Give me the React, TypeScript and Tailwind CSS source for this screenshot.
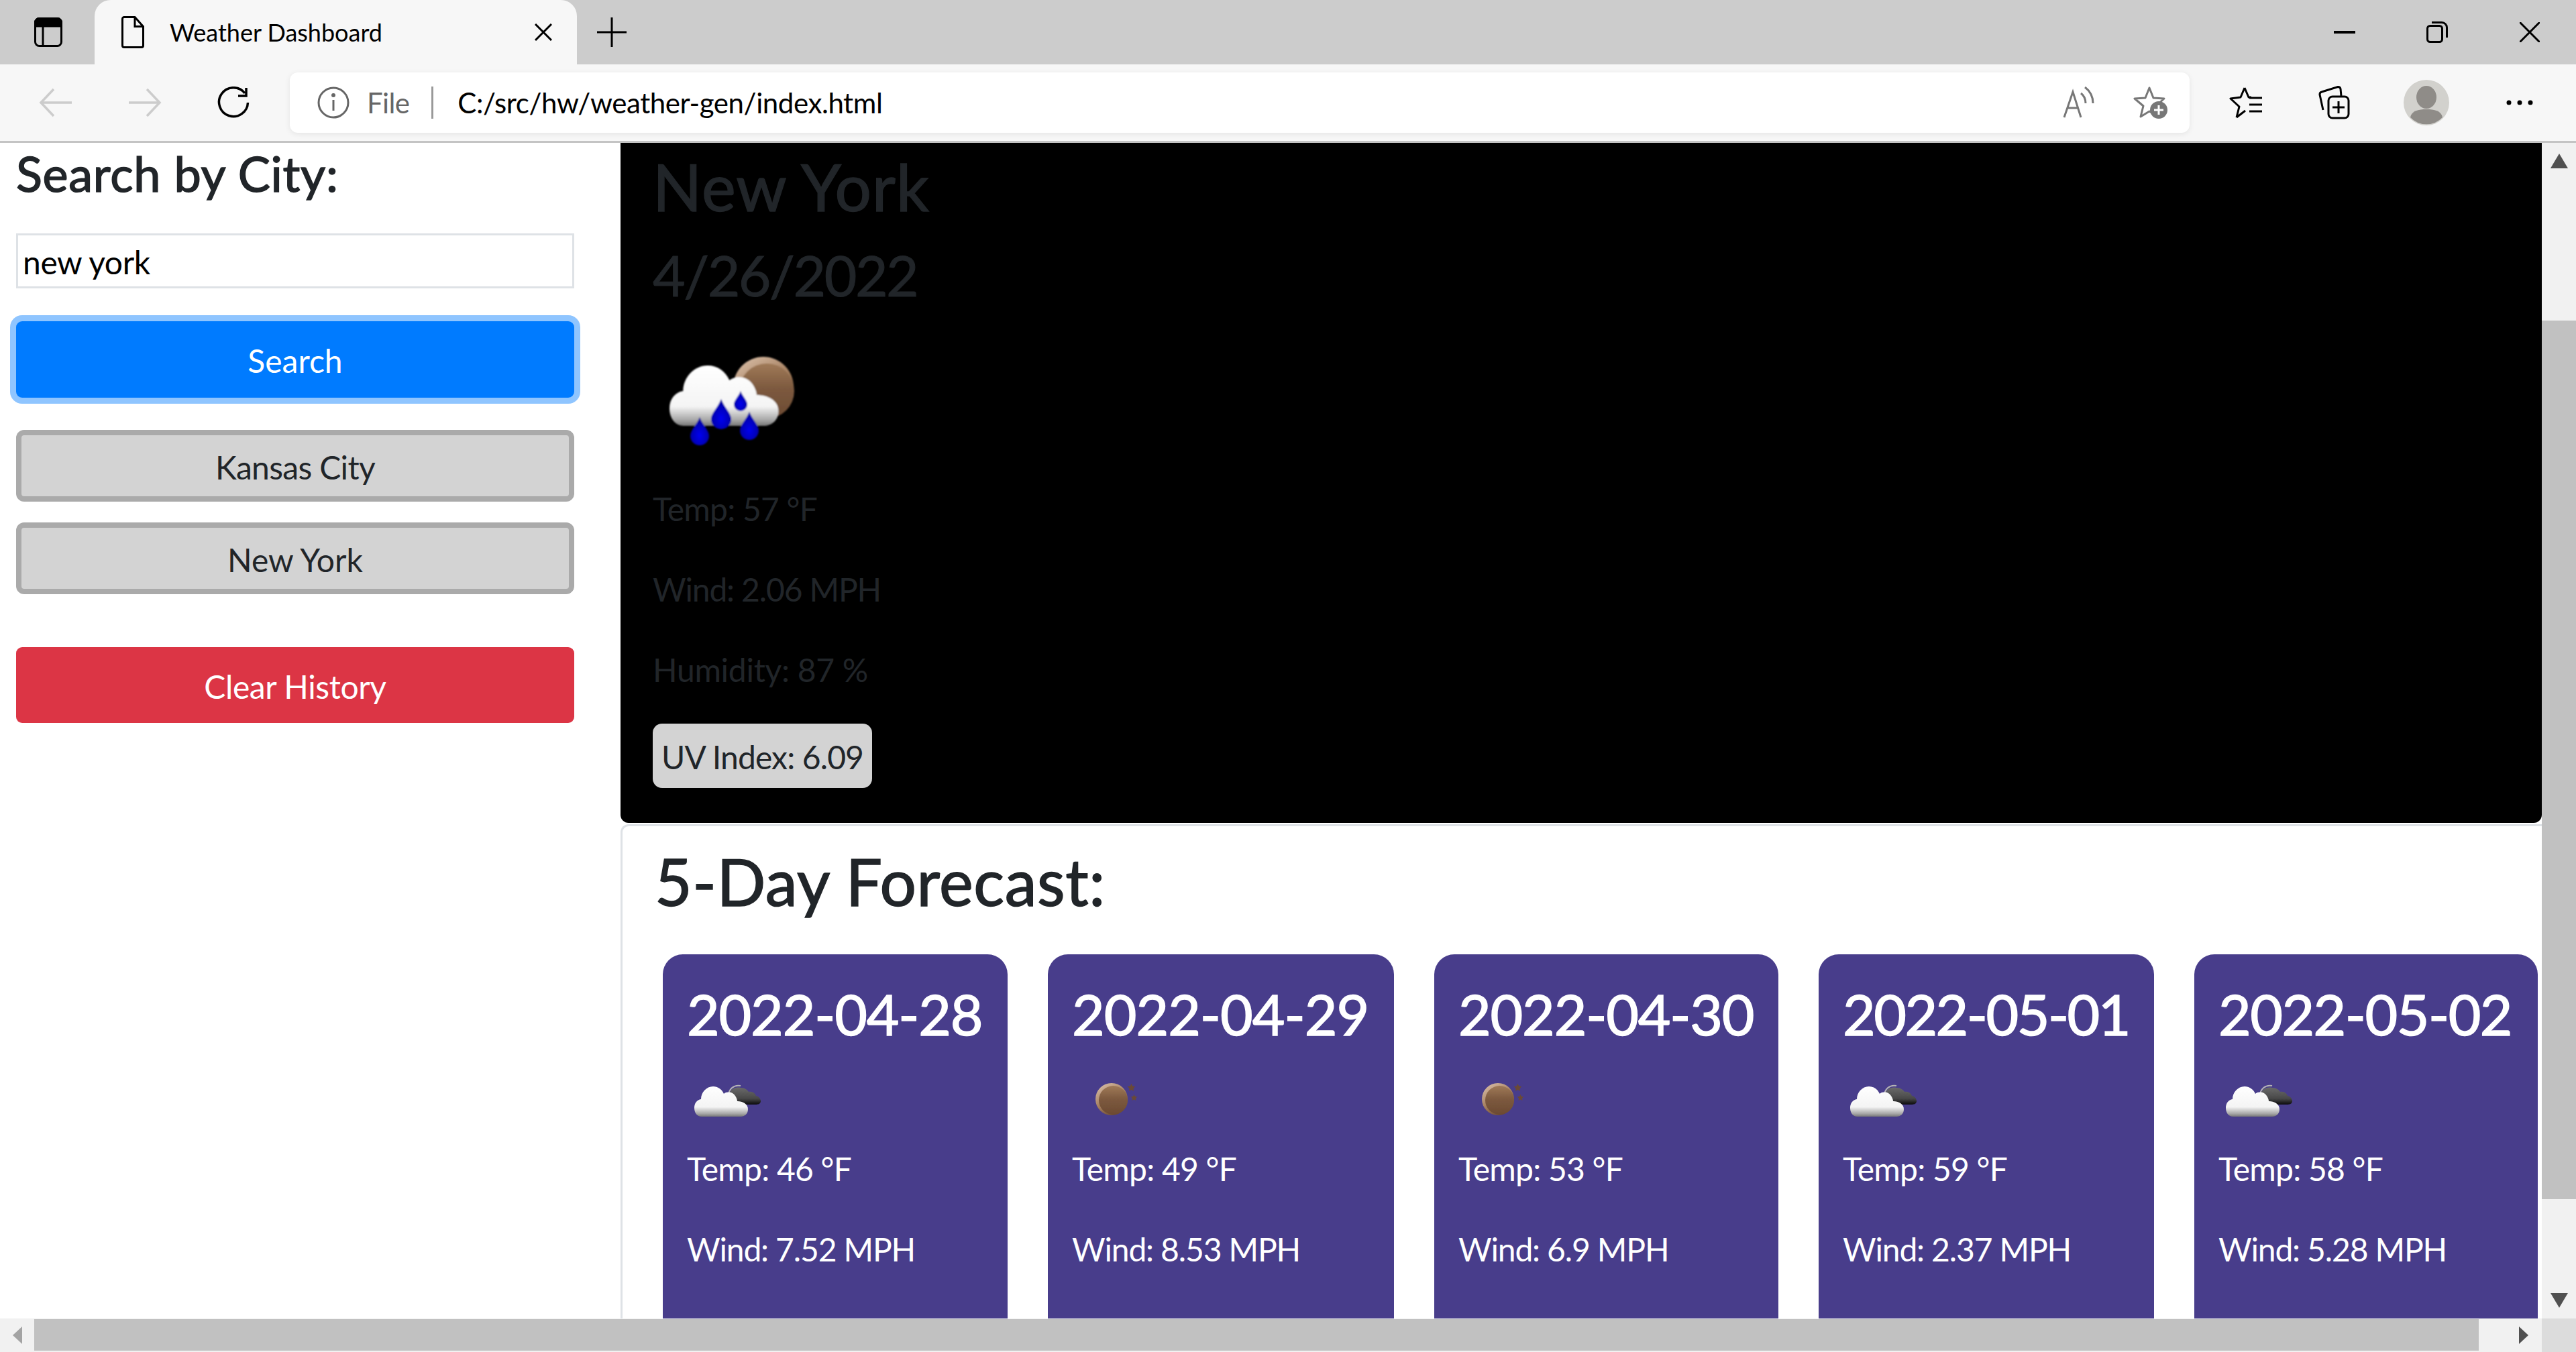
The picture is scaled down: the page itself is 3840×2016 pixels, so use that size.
import React from 'react';

const cloudPath =
  'M22 103 C14 103 11 96 11 90 C11 83 15 78 21 77 C21 67 29 58 39 58 C46 58 52 62 55 69 C60 65 68 66 72 72 C74 75 75 78 75 80 C83 80 91 84 91 92 C91 99 86 103 80 103 Z';

const drop = (cx: number, cy: number, r: number) =>
  `M${cx} ${cy - 2 * r} C${cx + 0.3 * r} ${cy - 1.2 * r} ${cx + r} ${cy - 0.6 * r} ${cx + r} ${cy} A${r} ${r} 0 1 1 ${cx - r} ${cy} C${cx - r} ${cy - 0.6 * r} ${cx - 0.3 * r} ${cy - 1.2 * r} ${cx} ${cy - 2 * r} Z`;

const star = (cx: number, cy: number, r: number) => {
  const pts: string[] = [];
  for (let i = 0; i < 10; i++) {
    const a = (Math.PI / 5) * i - Math.PI / 2;
    const d = i % 2 === 0 ? r : r * 0.5;
    pts.push(`${cx + d * Math.cos(a)},${cy + d * Math.sin(a)}`);
  }
  return pts.join(' ');
};

const Gradients = () => (
  <svg width="0" height="0" className="absolute">
    <defs>
      <linearGradient id="whiteCloud" x1="0" y1="0" x2="0" y2="1">
        <stop offset="0" stopColor="#ffffff" />
        <stop offset="0.68" stopColor="#f4f4f4" />
        <stop offset="0.9" stopColor="#a8a8a8" />
        <stop offset="1" stopColor="#777777" />
      </linearGradient>
      <linearGradient id="darkCloud" x1="0" y1="0" x2="0" y2="1">
        <stop offset="0" stopColor="#6a6a6a" />
        <stop offset="0.65" stopColor="#484848" />
        <stop offset="1" stopColor="#0c0c0c" />
      </linearGradient>
      <linearGradient id="moonRim" x1="0" y1="0" x2="0.6" y2="1">
        <stop offset="0" stopColor="#e0c6b0" />
        <stop offset="0.6" stopColor="#a27c5c" />
        <stop offset="1" stopColor="#6b4a30" />
      </linearGradient>
      <linearGradient id="moonBody" x1="0" y1="0" x2="0" y2="1">
        <stop offset="0" stopColor="#a07a58" />
        <stop offset="0.45" stopColor="#7d5a3f" />
        <stop offset="1" stopColor="#6c4a32" />
      </linearGradient>
      <radialGradient id="waterDrop" cx="0.5" cy="0.65" r="0.6">
        <stop offset="0" stopColor="#0000f0" />
        <stop offset="1" stopColor="#000099" />
      </radialGradient>
      <filter id="soft" x="-10%" y="-10%" width="120%" height="120%">
        <feGaussianBlur stdDeviation="0.7" />
      </filter>
      <filter id="softer" x="-10%" y="-10%" width="120%" height="120%">
        <feGaussianBlur stdDeviation="1.2" />
      </filter>
    </defs>
  </svg>
);

const CloudIcon = () => (
  <svg viewBox="0 0 150 145" className="w-[150px] h-[145px]">
    <g filter="url(#soft)">
      <path d="M62 72 C62 62 70 55 80 57" fill="none" stroke="#b5b5b5" strokeWidth="2" />
      <path d="M62 72 C64 62 72 58 80 60 C86 60 90 63 92 66 C98 65 102 69 103 72 C108 73 110 77 110 80 C110 84 106 85 102 85 L80 85 L62 78 Z" fill="url(#darkCloud)" />
      <path d={cloudPath} fill="url(#whiteCloud)" />
    </g>
  </svg>
);

const MoonIcon = () => (
  <svg viewBox="0 0 150 145" className="w-[150px] h-[145px]">
    <g filter="url(#soft)">
      <circle cx="59" cy="77" r="24" fill="url(#moonRim)" />
      <circle cx="61.5" cy="78.5" r="21.5" fill="url(#moonBody)" />
      <polygon points={star(88.5, 60, 6)} fill="#6b4a35" />
      <polygon points={star(92.5, 75, 5)} fill="#6b4a35" />
    </g>
  </svg>
);

const RainIcon = () => (
  <svg viewBox="0 0 240 237" className="w-[240px] h-[237px]">
    <g filter="url(#softer)">
      <circle cx="165" cy="93" r="45" fill="url(#moonRim)" />
      <circle cx="170" cy="99" r="41" fill="url(#moonBody)" />
      <path d={cloudPath} fill="url(#whiteCloud)" transform="translate(2.7 -55) scale(2.03 2)" />
      <path d={drop(102, 141, 15)} fill="url(#waterDrop)" />
      <path d={drop(70, 166, 14)} fill="url(#waterDrop)" />
      <path d={drop(144, 158, 14)} fill="url(#waterDrop)" />
      <path d={drop(131, 119, 10)} fill="url(#waterDrop)" />
    </g>
  </svg>
);

const forecast = [
  { date: '2022-04-28', temp: 46, wind: '7.52', humidity: 64, night: false, width: 'w-[514px]', track: 'tracking-[-0.014em]' },
  { date: '2022-04-29', temp: 49, wind: '8.53', humidity: 58, night: true, width: 'w-[516px]', track: 'tracking-[-0.012em]' },
  { date: '2022-04-30', temp: 53, wind: '6.9', humidity: 52, night: true, width: 'w-[513px]', track: 'tracking-[-0.014em]' },
  { date: '2022-05-01', temp: 59, wind: '2.37', humidity: 60, night: false, width: 'w-[500px]', track: 'tracking-[-0.03em]' },
  { date: '2022-05-02', temp: 58, wind: '5.28', humidity: 71, night: false, width: 'w-[512px]', track: 'tracking-[-0.018em]' },
];

const TabStrip = () => (
  <div className="h-[96px] shrink-0 bg-[#cccccc] flex items-end">
    <div className="ml-[51px] w-[90px] h-[96px] flex items-center">
      <svg viewBox="0 0 42 44" className="w-[42px] h-[44px]" fill="none" stroke="#000" strokeWidth="3">
        <rect x="1.5" y="1.5" width="39" height="41" rx="6" />
        <path d="M1.5 8 a6 6 0 0 1 6 -6.5 h27 a6 6 0 0 1 6 6.5 v5 h-39 z" fill="#000" />
        <path d="M13 13 V42" />
      </svg>
    </div>
    <div className="w-[719px] h-[96px] bg-[#f7f7f7] rounded-t-[24px] flex items-center pl-[40px] pr-[37px]">
      <svg viewBox="0 0 34 48" className="w-[34px] h-[48px] shrink-0" fill="none" stroke="#000" strokeWidth="3">
        <path d="M1.5 4 a2.5 2.5 0 0 1 2.5 -2.5 h16 l12.5 14 v28.5 a2.5 2.5 0 0 1 -2.5 2.5 h-26 a2.5 2.5 0 0 1 -2.5 -2.5 z" />
        <path d="M20 1.5 v14 h12.5" />
      </svg>
      <span className="ml-[38px] text-[36px] leading-[48px] text-black">Weather Dashboard</span>
      <svg viewBox="0 0 26 26" className="ml-auto w-[26px] h-[26px]" stroke="#000" strokeWidth="3">
        <path d="M1 1 L25 25 M25 1 L1 25" />
      </svg>
    </div>
    <div className="ml-[30px] h-[96px] flex items-center">
      <svg viewBox="0 0 44 44" className="w-[44px] h-[44px]" stroke="#000" strokeWidth="3">
        <path d="M22 0 V44 M0 22 H44" />
      </svg>
    </div>
    <div className="ml-auto h-[96px] flex">
      <div className="w-[138px] flex items-center justify-center">
        <svg viewBox="0 0 32 4" className="w-[32px] h-[4px]" stroke="#000" strokeWidth="4">
          <path d="M0 2 H32" />
        </svg>
      </div>
      <div className="w-[138px] flex items-center justify-center">
        <svg viewBox="0 0 32 32" className="w-[32px] h-[32px]" fill="none" stroke="#000" strokeWidth="3">
          <rect x="1.5" y="6.5" width="22" height="24" rx="4" />
          <path d="M8 1.5 H23 a7.5 7.5 0 0 1 7.5 7.5 V24" />
        </svg>
      </div>
      <div className="w-[138px] flex items-center justify-center">
        <svg viewBox="0 0 30 30" className="w-[30px] h-[30px]" stroke="#000" strokeWidth="3">
          <path d="M0 0 L30 30 M30 0 L0 30" />
        </svg>
      </div>
    </div>
  </div>
);

const Toolbar = () => (
  <div className="h-[117px] shrink-0 bg-[#f7f7f7] border-b-[3px] border-[#c4c4c4] flex items-center pl-[17px]">
    <div className="w-[132px] flex justify-center">
      <svg viewBox="0 0 50 44" className="w-[50px] h-[44px]" fill="none" stroke="#cccccc" strokeWidth="3.5">
        <path d="M49 22 H3 M22 2 L3 22 L22 42" />
      </svg>
    </div>
    <div className="w-[133px] flex justify-center">
      <svg viewBox="0 0 50 44" className="w-[50px] h-[44px]" fill="none" stroke="#cccccc" strokeWidth="3.5">
        <path d="M1 22 H47 M28 2 L47 22 L28 42" />
      </svg>
    </div>
    <div className="w-[132px] flex justify-center">
      <svg viewBox="0 0 48 48" className="w-[48px] h-[48px]" fill="none" stroke="#000" strokeWidth="3.5">
        <path d="M41 10 A21.5 21.5 0 1 0 45.5 24" />
        <path d="M43 2 V14 H31" />
      </svg>
    </div>
    <div className="ml-[18px] w-[2832px] h-[90px] bg-white rounded-[12px] shadow-[0_2px_8px_rgba(0,0,0,0.08)] flex items-center pl-[41px] pr-[32px]">
      <svg viewBox="0 0 48 48" className="w-[48px] h-[48px] shrink-0" fill="none" stroke="#666" strokeWidth="3">
        <circle cx="24" cy="24" r="22" />
        <path d="M24 20 V36" />
        <circle cx="24" cy="13" r="1.5" fill="#666" />
      </svg>
      <span className="ml-[26px] text-[42px] leading-[48px] text-[#666666] tracking-[-0.015em]">File</span>
      <span className="ml-[33px] w-[3px] h-[48px] bg-[#999999]" />
      <span className="ml-[36px] text-[42px] leading-[48px] text-black tracking-[-0.01em]">C:/src/hw/weather-gen/index.html</span>
      <svg viewBox="0 0 48 48" className="ml-auto w-[48px] h-[48px]" fill="none" stroke="#777" strokeWidth="3">
        <path d="M2 46 L15 8 L27 46 M7 32 H23" />
        <path d="M27 10 C32 14 34 19 34 25" />
        <path d="M33 1 C41 7 45 15 45 25" />
      </svg>
      <svg viewBox="0 0 52 50" className="ml-[57px] w-[52px] h-[50px]" fill="none" stroke="#777" strokeWidth="3">
        <path d="M24 3 L30 18 L46 19 L34 30 L38 46 L24 38 L11 46 L15 30 L2 19 L18 18 Z" strokeLinejoin="round" />
        <circle cx="38" cy="36" r="13" fill="#777" stroke="none" />
        <path d="M38 29 V43 M31 36 H45" stroke="#fff" />
      </svg>
    </div>
    <div className="ml-[18px] w-[132px] flex justify-center">
      <svg viewBox="0 0 50 48" className="w-[50px] h-[48px]" fill="none" stroke="#000" strokeWidth="3">
        <path d="M23 2 L29 16 H33 M11 46 L15 30 L2 18 L17 16 L23 2 M11 46 L24 36" strokeLinejoin="round" />
        <path d="M30 17 H49 M30 27 H49 M30 37 H49" />
      </svg>
    </div>
    <div className="w-[130px] flex justify-center">
      <svg viewBox="0 0 48 50" className="w-[48px] h-[50px]" fill="none" stroke="#000" strokeWidth="3">
        <path d="M8 36 L3 13 a4 4 0 0 1 3 -4 L30 1.5 a4 4 0 0 1 4 3 L35 15" />
        <rect x="16" y="16" width="30" height="32" rx="6" />
        <path d="M31 23 V41 M22 32 H40" />
      </svg>
    </div>
    <div className="w-[146px] flex justify-center">
      <svg viewBox="0 0 68 68" className="w-[68px] h-[68px]">
        <circle cx="34" cy="34" r="34" fill="#d2d1cd" />
        <ellipse cx="34" cy="26" rx="15" ry="17" fill="#8f8c88" />
        <path d="M10 56 C12 46 22 44 34 44 C46 44 56 46 58 56 A33 33 0 0 1 10 56 Z" fill="#8f8c88" />
      </svg>
    </div>
    <div className="w-[132px] flex justify-center">
      <svg viewBox="0 0 40 8" className="w-[40px] h-[8px]" fill="#000">
        <circle cx="4" cy="4" r="3.5" />
        <circle cx="20" cy="4" r="3.5" />
        <circle cx="36" cy="4" r="3.5" />
      </svg>
    </div>
  </div>
);

const Sidebar = () => (
  <aside className="w-[925px] shrink-0 bg-white pl-[24px] pt-[2px] pr-[69px]">
    <h4 className="text-[72px] leading-[86px] tracking-[0.01em] [-webkit-text-stroke:1.5px_#212529] text-[#212529]">Search by City:</h4>
    <input
      readOnly
      value="new york"
      className="mt-[47px] block w-full h-[82px] border-[3px] border-[#dee2e6] pl-[7px] pt-[2px] text-[48px] tracking-[-0.008em] text-black outline-none"
    />
    <button className="mt-[49px] block w-full h-[114px] rounded-[9px] bg-[#007bff] pt-[4px] text-[48px] leading-[72px] text-white shadow-[0_0_0_9px_#8fc5ff]">
      Search
    </button>
    <button className="mt-[48px] block w-full h-[107px] rounded-[12px] border-[8px] border-[#aaaaaa] bg-[#d3d3d3] pt-[4px] text-[48px] leading-[72px] tracking-[-0.014em] text-[#212529]">
      Kansas City
    </button>
    <button className="mt-[31px] block w-full h-[107px] rounded-[12px] border-[8px] border-[#aaaaaa] bg-[#d3d3d3] pt-[4px] text-[48px] leading-[72px] text-[#212529]">
      New York
    </button>
    <button className="mt-[79px] block w-full h-[113px] rounded-[9px] bg-[#dc3545] pt-[4px] text-[48px] leading-[72px] tracking-[-0.008em] text-white">
      Clear History
    </button>
  </aside>
);

const CurrentWeather = () => (
  <section className="h-[1014px] shrink-0 bg-black rounded-b-[12px] pl-[48px] pt-[7px] text-[#212529]">
    <h2 className="text-[96px] leading-[115px] tracking-[0.012em] [-webkit-text-stroke:1.5px_#212529]">New York</h2>
    <h2 className="mt-[24px] text-[84px] leading-[101px] tracking-[-0.03em] [-webkit-text-stroke:1px_#212529]">4/26/2022</h2>
    <div className="mt-[24px] h-[239px]">
      <RainIcon />
    </div>
    <p className="text-[48px] leading-[72px] tracking-[-0.016em]">Temp: 57 °F</p>
    <p className="mt-[48px] text-[48px] leading-[72px] tracking-[-0.024em]">Wind: 2.06 MPH</p>
    <p className="mt-[48px] text-[48px] leading-[72px] tracking-[-0.006em]">Humidity: 87 %</p>
    <p className="mt-[44px] w-[327px] h-[96px] rounded-[14px] bg-[#d3d3d3] pl-[13px] pt-[14px] text-[48px] leading-[72px] tracking-[-0.018em] whitespace-nowrap">UV Index: 6.09</p>
  </section>
);

const Forecast = () => (
  <section className="mt-[2px] flex-1 min-h-0 overflow-hidden bg-white border-[3px] border-b-0 border-r-0 border-[#dee2e6] rounded-tl-[12px] pt-[24px]">
    <h2 className="ml-[48px] text-[96px] leading-[115px] tracking-[0.006em] [-webkit-text-stroke:1.5px_#212529] text-[#212529]">5-Day Forecast:</h2>
    <div className="mt-[52px] ml-[60px] flex gap-[60px]">
      {forecast.map((day) => (
        <div key={day.date} className={`${day.width} shrink-0 bg-[#483d8b] rounded-[30px] px-[36px] pt-[38px] pb-[36px] text-white`}>
          <h3 className={`${day.track} text-[84px] leading-[101px] [-webkit-text-stroke:1.5px_#ffffff] whitespace-nowrap`}>{day.date}</h3>
          <div className="h-[145px]">{day.night ? <MoonIcon /> : <CloudIcon />}</div>
          <p className="text-[48px] leading-[72px] tracking-[-0.016em]">Temp: {day.temp} °F</p>
          <p className="mt-[48px] text-[48px] leading-[72px] tracking-[-0.024em]">Wind: {day.wind} MPH</p>
          <p className="mt-[50px] text-[48px] leading-[72px] tracking-[-0.006em]">Humidity: {day.humidity} %</p>
        </div>
      ))}
    </div>
  </section>
);

const VerticalScrollbar = () => (
  <div className="w-[51px] shrink-0 bg-[#f1f1f1] flex flex-col">
    <div className="h-[54px] flex items-center justify-center">
      <svg viewBox="0 0 26 22" className="w-[26px] h-[22px]" fill="#505050"><path d="M13 0 L26 22 H0 Z" /></svg>
    </div>
    <div className="h-[211px]" />
    <div className="h-[1310px] bg-[#c1c1c1]" />
    <div className="flex-1" />
    <div className="h-[54px] flex items-center justify-center">
      <svg viewBox="0 0 26 22" className="w-[26px] h-[22px]" fill="#505050"><path d="M0 0 H26 L13 22 Z" /></svg>
    </div>
  </div>
);

const HorizontalScrollbar = () => (
  <div className="h-[50px] shrink-0 flex">
    <div className="flex-1 bg-[#f1f1f1] flex pt-[1px] pb-[2px]">
      <div className="w-[51px] flex items-center justify-center">
        <svg viewBox="0 0 14 26" className="w-[14px] h-[26px]" fill="#a3a3a3"><path d="M14 0 V26 L0 13 Z" /></svg>
      </div>
      <div className="w-[3644px] bg-[#c1c1c1]" />
      <div className="flex-1 flex items-center justify-center pl-[40px]">
        <svg viewBox="0 0 14 26" className="w-[14px] h-[26px]" fill="#505050"><path d="M0 0 L14 13 L0 26 Z" /></svg>
      </div>
    </div>
    <div className="w-[51px] bg-[#dcdcdc]" />
  </div>
);

const App: React.FC = () => {
  return (
    <div className="w-[3840px] h-[2016px] flex flex-col overflow-hidden bg-white font-[Lato,sans-serif]">
      <Gradients />
      <TabStrip />
      <Toolbar />
      <div className="flex-1 min-h-0 flex">
        <Sidebar />
        <main className="flex-1 min-w-0 flex flex-col">
          <CurrentWeather />
          <Forecast />
        </main>
        <VerticalScrollbar />
      </div>
      <HorizontalScrollbar />
    </div>
  );
};

export default App;
